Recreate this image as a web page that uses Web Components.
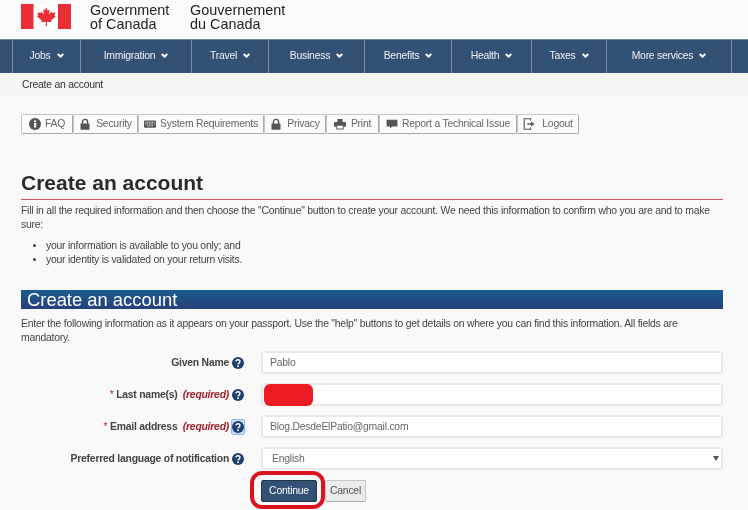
<!DOCTYPE html>
<html lang="en">
<head>
<meta charset="utf-8">
<title>Create an account</title>
<style>
  html, body { margin: 0; height: 510px; overflow: hidden; background: #f9f9f9; }
  body { font-family: "Liberation Sans", Arial, sans-serif; font-size: 10.4px; letter-spacing: -.23px; color: #333; filter: blur(.3px); }
</style>
</head>
<body>
<gc-header></gc-header>
<gc-nav>
  <gc-nav-item>Jobs</gc-nav-item>
  <gc-nav-item>Immigration</gc-nav-item>
  <gc-nav-item>Travel</gc-nav-item>
  <gc-nav-item>Business</gc-nav-item>
  <gc-nav-item>Benefits</gc-nav-item>
  <gc-nav-item>Health</gc-nav-item>
  <gc-nav-item>Taxes</gc-nav-item>
  <gc-nav-item>More services</gc-nav-item>
</gc-nav>
<gc-breadcrumb>Create an account</gc-breadcrumb>
<gc-toolbar>
  <gc-tool icon="info" style="width:52px">FAQ</gc-tool>
  <gc-tool icon="lock" style="width:65px" gap="5">Security</gc-tool>
  <gc-tool icon="keyboard" style="width:126px">System Requirements</gc-tool>
  <gc-tool icon="lock" style="width:62px" gap="5">Privacy</gc-tool>
  <gc-tool icon="print" style="width:53px" gap="5">Print</gc-tool>
  <gc-tool icon="comment" style="width:138px">Report a Technical Issue</gc-tool>
  <gc-tool icon="logout" style="width:62px" gap="7">Logout</gc-tool>
</gc-toolbar>
<gc-intro>
  <span slot="title">Create an account</span>
  <p>Fill in all the required information and then choose the "Continue" button to create your account. We need this information to confirm who you are and to make sure:</p>
  <ul>
    <li>your information is available to you only; and</li>
    <li>your identity is validated on your return visits.</li>
  </ul>
</gc-intro>
<gc-account-form>
  <span slot="title">Create an account</span>
  <span slot="lead">Enter the following information as it appears on your passport. Use the "help" buttons to get details on where you can find this information. All fields are mandatory.</span>
  <gc-field label="Given Name" value="Pablo"></gc-field>
  <gc-field label="Last name(s)" required redacted></gc-field>
  <gc-field label="Email address" required focused value="Blog.DesdeElPatio@gmail.com"></gc-field>
  <gc-field label="Preferred language of notification" select value="English"></gc-field>
</gc-account-form>

<script>
  const ICONS = {
    info: '<circle cx="6" cy="6" r="6" fill="#555"/><rect x="5" y="5" width="2.2" height="4.6" fill="#f8f8f8"/><rect x="5" y="2.4" width="2.2" height="1.8" fill="#f8f8f8"/>',
    lock: '<path d="M3.4 6V4a2.6 2.6 0 0 1 5.2 0v2" fill="none" stroke="#555" stroke-width="1.4"/><rect x="1.5" y="5.6" width="9" height="6.2" rx=".6" fill="#555"/>',
    keyboard: '<rect x="0" y="2.4" width="12" height="7.4" rx=".8" fill="#555"/><path d="M1.4 4.2h9.2M1.4 6h9.2M3 7.9h6" stroke="#eee" stroke-width=".9" stroke-dasharray="1.1 .6" fill="none"/>',
    print: '<rect x="3.4" y="1" width="5.2" height="3" fill="#555"/><rect x="0" y="4" width="12" height="4.8" rx=".8" fill="#555"/><rect x="2.8" y="7.2" width="6.4" height="3.8" fill="#f8f8f8" stroke="#555" stroke-width=".9"/>',
    comment: '<path d="M.6 1.8h10.8v6.6H6.2L4 10.4v-2H.6z" fill="#555"/>',
    logout: '<path d="M7.6 2.4V.8H1.2v10.4h6.4V9.6" fill="none" stroke="#555" stroke-width="1.1"/><path d="M4.4 5.3h3.6V3.4L11.6 6 8 8.6V6.7H4.4z" fill="#555"/>'
  };

  class GcHeader extends HTMLElement {
    constructor() {
      super();
      this.attachShadow({ mode: "open" }).innerHTML = `
      <style>
        :host { display: flex; height: 39px; padding-left: 21px; align-items: flex-start; background: #fbfbfb; letter-spacing: 0; }
        svg { display: block; margin-top: 4px; }
        .sig { margin-left: 19px; width: 100px; font-size: 14.4px; line-height: 14px; margin-top: 3px; color: #222; }
        .sig + .sig { margin-left: 0; }
      </style>
      <svg width="50" height="25" viewBox="0 0 50 25">
        <rect width="50" height="25" fill="#fff"/>
        <rect width="12.5" height="25" fill="#ea2d37"/>
        <rect x="37" width="13" height="25" fill="#ea2d37"/>
        <path fill="#ea2d37" d="M25 3.2l1.8 3.3 1.9-1-.9 4.9 2.8-2.9.7 1.6 3.2-.7-1 3.3 1.3.7-4.9 4 .7 1.9-4.7-.6.2 4.6h-1.4l.2-4.6-4.7.6.7-1.9-4.9-4 1.3-.7-1-3.3 3.2.7.7-1.6 2.8 2.9-.9-4.9 1.9 1z"/>
      </svg>
      <div class="sig">Government<br>of Canada</div>
      <div class="sig">Gouvernement<br>du Canada</div>`;
    }
  }
  customElements.define("gc-header", GcHeader);

  class GcNav extends HTMLElement {
    constructor() {
      super();
      this.attachShadow({ mode: "open" }).innerHTML = `
      <style>
        :host {
          display: grid;
          grid-template-columns: 68px 111px 77px 96px 87px 80px 75px 126px;
          height: 33px;
          padding-left: 12px;
          background: #335075;
          border-top: 1px solid #6f86a3;
        }
      </style>
      <slot></slot>`;
    }
  }
  customElements.define("gc-nav", GcNav);

  class GcNavItem extends HTMLElement {
    constructor() {
      super();
      this.attachShadow({ mode: "open" }).innerHTML = `
      <style>
        :host {
          display: flex; align-items: center; justify-content: center; gap: 6px;
          color: #eef1f5; padding-bottom: 2px;
          border-left: 1px solid #7c8fa8; box-sizing: border-box;
        }
        :host(:last-child) { border-right: 1px solid #7c8fa8; }
        svg { display: block; }
      </style>
      <slot></slot>
      <svg width="7" height="5" viewBox="0 0 7 5"><path d="M.8 1l2.7 2.7L6.2 1" fill="none" stroke="#fff" stroke-width="2"/></svg>`;
    }
  }
  customElements.define("gc-nav-item", GcNavItem);

  class GcBreadcrumb extends HTMLElement {
    constructor() {
      super();
      this.attachShadow({ mode: "open" }).innerHTML = `
      <style>
        :host { display: block; height: 24px; line-height: 23px; padding-left: 22px; background: #f5f5f5; color: #333; }
      </style>
      <slot></slot>`;
    }
  }
  customElements.define("gc-breadcrumb", GcBreadcrumb);

  class GcToolbar extends HTMLElement {
    constructor() {
      super();
      this.attachShadow({ mode: "open" }).innerHTML = `
      <style>
        :host { display: flex; padding: 17px 0 0 21px; height: 20px; }
      </style>
      <slot></slot>`;
    }
  }
  customElements.define("gc-toolbar", GcToolbar);

  class GcTool extends HTMLElement {
    constructor() {
      super();
      const icon = ICONS[this.getAttribute("icon")] || "";
      const gap = this.getAttribute("gap") || 4;
      this.attachShadow({ mode: "open" }).innerHTML = `
      <style>
        :host {
          display: flex; align-items: center; justify-content: center; gap: ${gap}px;
          box-sizing: border-box; height: 20px; padding-bottom: 1px;
          background: #fbfbfb; color: #666;
          border: 1px solid #c6c6c6; border-bottom-color: #aaa; border-right-color: #aaa; border-radius: 2px;
        }
        svg { display: block; flex: none; }
      </style>
      <svg width="12" height="12" viewBox="0 0 12 12">${icon}</svg>
      <slot></slot>`;
    }
  }
  customElements.define("gc-tool", GcTool);

  class GcIntro extends HTMLElement {
    constructor() {
      super();
      this.attachShadow({ mode: "open" }).innerHTML = `
      <style>
        :host { display: block; margin: 0 25px 0 21px; padding-top: 36px; line-height: 14px; color: #444; }
        h1 { margin: 0; height: 30px; box-sizing: border-box; font-size: 21px; line-height: 26px; letter-spacing: 0; font-weight: bold; color: #2b2b2b; border-bottom: 1px solid #c9565c; }
        ::slotted(p) { margin: 4px 0 7px; }
        ::slotted(ul) { margin: 0; padding-left: 25px; }
      </style>
      <h1><slot name="title"></slot></h1>
      <slot></slot>`;
    }
  }
  customElements.define("gc-intro", GcIntro);

  class GcAccountForm extends HTMLElement {
    constructor() {
      super();
      this.attachShadow({ mode: "open" }).innerHTML = `
      <style>
        :host { display: block; position: relative; margin: 23px 25px 0 21px; line-height: 14px; color: #444; }
        h2 {
          margin: 0; height: 19px; padding-left: 6px;
          background: linear-gradient(to bottom, #1c5c90, #274079);
          color: #fff; font-size: 18.4px; line-height: 19px; letter-spacing: 0; font-weight: normal;
        }
        .lead { margin: 8px 0 6px; }
        .rows { display: flex; flex-direction: column; gap: 9px; }
        .actions { display: flex; gap: 8px; align-items: center; margin: 10px 0 0 240px; }
        button {
          box-sizing: border-box; height: 22px; font: inherit; letter-spacing: inherit; border-radius: 2px; padding: 0;
        }
        .go { width: 56px; background: #335075; color: #fff; border: 1px solid #26374a; }
        .no { width: 41px; background: #eaebed; color: #555; border: 1px solid #c6c6c6; border-bottom-color: #aaa; }
        .mark {
          position: absolute; left: 229px; top: 181px; width: 67px; height: 30px;
          border: 4px solid #d9141f; border-radius: 12px;
        }
      </style>
      <h2><slot name="title"></slot></h2>
      <div class="lead"><slot name="lead"></slot></div>
      <div class="rows"><slot></slot></div>
      <div class="actions">
        <button class="go">Continue</button>
        <button class="no">Cancel</button>
      </div>
      <div class="mark"></div>`;
    }
  }
  customElements.define("gc-account-form", GcAccountForm);

  class GcField extends HTMLElement {
    constructor() {
      super();
      const label = this.getAttribute("label");
      const value = this.getAttribute("value") || "";
      const req = this.hasAttribute("required");
      const isSelect = this.hasAttribute("select");
      this.attachShadow({ mode: "open" }).innerHTML = `
      <style>
        :host { display: grid; grid-template-columns: 208px 32px 1fr; align-items: center; height: 23px; }
        .label { text-align: right; font-weight: bold; color: #444; white-space: nowrap; }
        .star { color: #b3202c; font-weight: normal; }
        .req { color: #a3202c; font-style: italic; }
        .help { display: flex; justify-content: center; width: 12px; margin-left: 3px; }
        .help.on { padding: 1px 0; background: #c9ddf7; outline: 1px solid #8db4e6; border-radius: 1px; }
        svg { display: block; }
        .box {
          position: relative; box-sizing: border-box; height: 23px; padding: 0 7px; line-height: 19px;
          background: #fff; color: #666; border: 2px solid #e8e8e8; border-radius: 3px;
        }
        .box.sel { padding-left: 9px; }
        .arrow { position: absolute; right: 2px; top: 7px; width: 0; height: 0; border: 3px solid transparent; border-top: 5px solid #555; border-bottom: 0; }
        .blot { position: absolute; left: 1px; top: -1px; width: 49px; height: 22px; background: #ed1c24; border-radius: 6px; }
      </style>
      <div class="label">${req ? '<span class="star">*</span> ' : ""}${label}${req ? ' &nbsp;<span class="req">(required)</span>' : ""}</div>
      <div class="help${this.hasAttribute("focused") ? " on" : ""}">
        <svg width="12" height="12" viewBox="0 0 12 12"><circle cx="6" cy="6" r="6" fill="#1f3f6e"/><path d="M4 4.6c0-2.4 4-2.4 4 0 0 1.5-2 1.4-2 2.8" fill="none" stroke="#fff" stroke-width="1.4"/><rect x="5.2" y="8.4" width="1.6" height="1.6" fill="#fff"/></svg>
      </div>
      <div class="box${isSelect ? " sel" : ""}">${value}${isSelect ? '<span class="arrow"></span>' : ""}${this.hasAttribute("redacted") ? '<span class="blot"></span>' : ""}</div>`;
    }
  }
  customElements.define("gc-field", GcField);
</script>
</body>
</html>
